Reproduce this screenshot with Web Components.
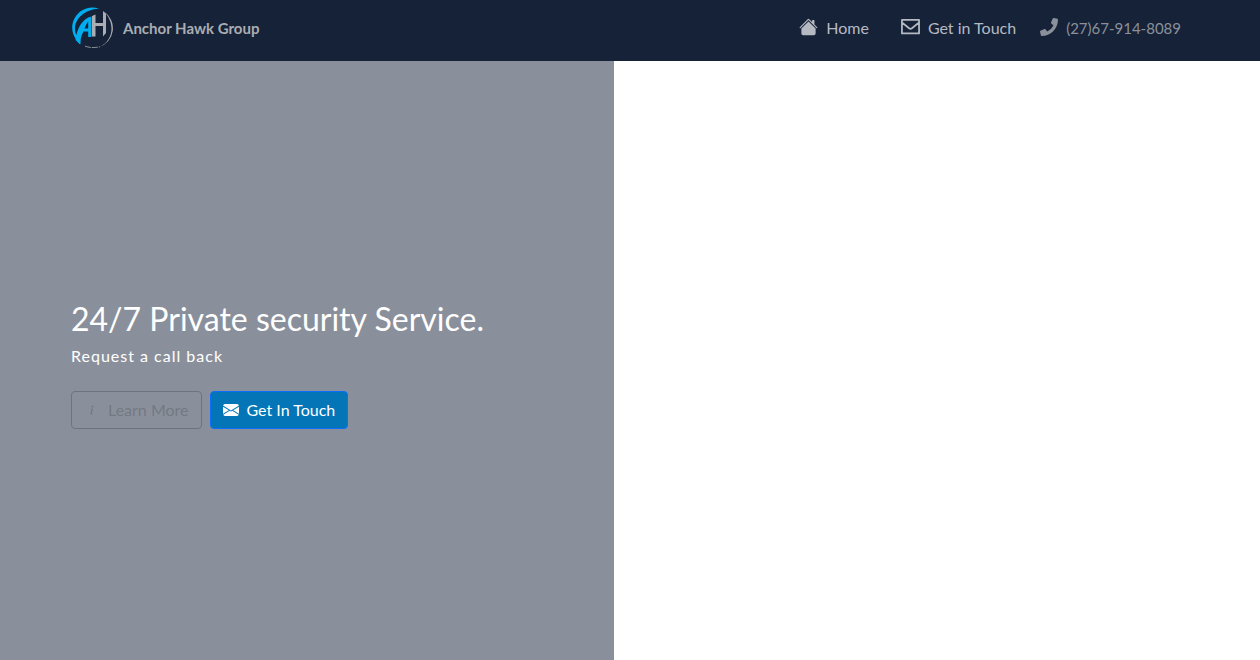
<!DOCTYPE html>
<html lang="en">
<head>
<meta charset="utf-8">
<meta name="viewport" content="width=device-width, initial-scale=1">
<title>Anchor Hawk Group</title>
<style>
html, body { height: 100%; }
body { margin: 0; background: #fff; font: 16px/24px Lato, "Open Sans", sans-serif; }
</style>
</head>
<body>
<ah-page>
  <ah-navbar slot="header">
    <ah-brand slot="brand">Anchor Hawk Group</ah-brand>
    <ah-nav-link icon="home" href="#home">Home</ah-nav-link>
    <ah-nav-link icon="mail" href="#contact">Get in Touch</ah-nav-link>
    <ah-nav-link icon="phone" href="tel:27679148089" muted>(27)67-914-8089</ah-nav-link>
  </ah-navbar>
  <ah-hero>
    <span slot="title">24/7 Private security Service.</span>
    <span slot="subtitle">Request a call back</span>
    <ah-button slot="actions" icon="info" outline>Learn More</ah-button>
    <ah-button slot="actions" icon="mail-fill">Get In Touch</ah-button>
  </ah-hero>
</ah-page>
<script>
const icons = {
  home: '<path d="M8.707 1.5a1 1 0 0 0-1.414 0L.646 8.146a.5.5 0 0 0 .708.708L8 2.207l6.646 6.647a.5.5 0 0 0 .708-.708L13 5.793V2.5a.5.5 0 0 0-.5-.5h-1a.5.5 0 0 0-.5.5v1.293z"/><path d="m8 3.293 6 6V13.5a1.5 1.5 0 0 1-1.5 1.5h-9A1.5 1.5 0 0 1 2 13.5V9.293z"/>',
  mail: '<path fill="none" stroke="currentColor" stroke-width="1.5" stroke-linejoin="round" d="M.8 2h14.4v11.400H.8zM1 4.300l5.800 4.800q1.200.9 2.400 0L15 4.300"/>',
  phone: '<path transform="scale(.03125)" d="M493.4 24.6l-104-24c-11.3-2.6-22.9 3.3-27.5 13.9l-48 112c-4.2 9.8-1.4 21.3 6.9 28l60.6 49.6c-36 76.7-98.9 140.5-177.2 177.2l-49.6-60.6c-6.8-8.3-18.2-11.1-28-6.9l-112 48C3.9 366.5-2 378.1.6 389.4l24 104C27.1 504.2 36.7 512 48 512c256.1 0 464-207.5 464-464 0-11.2-7.7-20.9-18.6-23.4z"/>',
  info: '<path d="m8.93 6.588-2.29.287-.082.38.45.083c.294.07.352.176.288.469l-.738 3.468c-.194.897.105 1.319.808 1.319.545 0 1.178-.252 1.465-.598l.088-.416c-.2.176-.492.246-.686.246-.275 0-.375-.193-.304-.533z"/><circle cx="8.5" cy="4.5" r="1"/>',
  'mail-fill': '<path d="M.05 3.555A2 2 0 0 1 2 2h12a2 2 0 0 1 1.95 1.555L8 8.414zM0 4.697v7.104l5.803-3.558zM6.761 8.83l-6.57 4.027A2 2 0 0 0 2 14h12a2 2 0 0 0 1.808-1.144l-6.57-4.027L8 9.586zm3.436-.586L16 11.801V4.697z"/>'
};
const svg = (name) => `<svg viewBox="0 0 16 16" fill="currentColor" aria-hidden="true">${icons[name]}</svg>`;

class AhElement extends HTMLElement {
  connectedCallback() {
    if (this.shadowRoot) return;
    this.attachShadow({ mode: 'open' }).innerHTML =
      `<style>*{box-sizing:border-box}</style>${this.render()}`;
  }
}

customElements.define('ah-page', class extends AhElement {
  render() {
    return `<style>
      :host { display: flex; flex-direction: column; min-height: 100%; height: 100%; }
      main { flex: 1; display: flex; }
    </style>
    <slot name="header"></slot><main><slot></slot></main>`;
  }
});

customElements.define('ah-navbar', class extends AhElement {
  render() {
    return `<style>
      :host { display: block; background: #162238; color: #b5bac2; }
      header { display: flex; justify-content: space-between; max-width: 1118px; margin: auto; padding: 7px 0 12px; }
      nav { display: flex; gap: 24px; padding: 9px 8px 0 0; }
    </style>
    <header><slot name="brand"></slot><nav><slot></slot></nav></header>`;
  }
});

customElements.define('ah-brand', class extends AhElement {
  render() {
    return `<style>
      :host { display: block; }
      a { display: flex; align-items: center; gap: 9px; color: #aaadb2; text-decoration: none; font-size: 15px; font-weight: 700; }
      svg { width: 43px; height: 42px; }
    </style>
    <a href="#top"><svg viewBox="0 0 43 42" aria-hidden="true">
      <path fill="#00aeef" d="M28 1.800A20 20 0 0 0 5.500 33Q8 37 9.300 37.300V33Q6 29 4.500 26C1.500 14 12 2.500 28 1.800z"/>
      <path fill="#00aeef" fill-rule="evenodd" d="M4.500 33C6 21 11.500 11.500 20.500 9.500V30h-3.300v-5.500h-4.700C10.500 28 9.300 32 9.300 37.300zM17.200 21.500v-7.300q-2 3-3.700 7.300z"/>
      <path fill="#aaadb2" d="M21 9l3.500-1.500V16h7.500V4l3 2.500V26l-3 3.500V19h-7.500v10.500H21z"/>
      <path fill="#aaadb2" d="M33 4.500A20 20 0 0 1 28 40.200C42 34 45 17 33 4.500z"/>
      <path fill="none" stroke="#aaadb2" stroke-width=".8" stroke-dasharray="6 1" d="M14 39.200q7 2.400 15 .5"/>
    </svg><slot></slot></a>`;
  }
});

customElements.define('ah-nav-link', class extends AhElement {
  render() {
    const muted = this.hasAttribute('muted');
    return `<style>
      :host { display: block; }
      a { display: flex; gap: 8px; color: ${muted ? '#8b919b' : 'inherit'}; font-size: ${muted ? 15 : 16}px; text-decoration: none; padding-right: ${this.getAttribute('icon') === 'home' ? 8 : 0}px; }
      svg { width: ${muted ? 18 : 19}px; height: ${muted ? 18 : 20}px; margin-top: ${muted ? 2 : 1}px; }
    </style>
    <a href="${this.getAttribute('href')}">${svg(this.getAttribute('icon'))}<slot></slot></a>`;
  }
});

customElements.define('ah-hero', class extends AhElement {
  render() {
    return `<style>
      :host { display: flex; align-items: center; width: calc(50% - 16px); background: #8a909b; color: #fff; }
      section { padding: 7px 24px 0 71px; }
      h1 { margin: 0 0 6px; font-size: 32px; line-height: 38px; font-weight: 400; }
      p { margin: 0 0 23px; letter-spacing: 1px; }
      .actions { display: flex; flex-wrap: wrap; gap: 8px; }
    </style>
    <section><h1><slot name="title"></slot></h1><p><slot name="subtitle"></slot></p>
    <div class="actions"><slot name="actions"></slot></div></section>`;
  }
});

customElements.define('ah-button', class extends AhElement {
  render() {
    const outline = this.hasAttribute('outline');
    return `<style>
      :host { display: block; }
      button { display: flex; align-items: center; gap: 8px; height: 38px; padding: 0 12px; font: inherit; border-radius: 4px;
        border: 1px solid ${outline ? '#6c757d' : '#0d6efd'}; background: ${outline ? 'transparent' : '#0476b7'}; color: ${outline ? '#727983' : '#fff'}; }
      svg { width: 16px; height: 16px; }
    </style>
    <button type="button">${svg(this.getAttribute('icon'))}<slot></slot></button>`;
  }
});
</script>
</body>
</html>
